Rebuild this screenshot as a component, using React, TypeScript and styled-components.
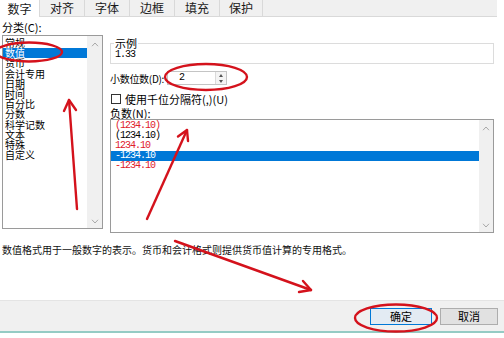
import React from "react";
import styled, { createGlobalStyle } from "styled-components";

const Global = createGlobalStyle`
  html, body { margin: 0; padding: 0; background: #fff; }
  body { font-family: "Noto Sans CJK SC", "Noto Sans", sans-serif; color: #000; }
`;

const Dialog = styled.div`
  position: relative;
  width: 504px;
  height: 338px;
  overflow: hidden;
  display: flex;
  flex-direction: column;
  background: #fff;
`;

const TabBar = styled.div`
  display: flex;
  height: 16px;
  width: 497px;
  background: #f0f0f0;
  border-bottom: 1px solid #d9d9d9;
`;

const Tab = styled.div<{ $active?: boolean; $w: number }>`
  width: ${(p) => p.$w}px;
  height: ${(p) => (p.$active ? 17 : 16)}px;
  box-sizing: border-box;
  display: flex;
  align-items: center;
  justify-content: center;
  font-size: 12px;
  line-height: 16px;
  border-right: 1px solid #d9d9d9;
  background: ${(p) => (p.$active ? "#fff" : "transparent")};
  color: #1a1a1a;
`;

const Main = styled.div`
  display: grid;
  grid-template-columns: 101px 384px;
  column-gap: 7px;
  padding: 2px 0 0 2px;
`;

const Column = styled.div`
  display: flex;
  flex-direction: column;
`;

const Label = styled.div<{ $h?: number; $mt?: number }>`
  font-size: 11px;
  height: ${(p) => p.$h ?? 16}px;
  line-height: ${(p) => p.$h ?? 16}px;
  margin-top: ${(p) => p.$mt ?? 0}px;
  white-space: nowrap;
`;

const ListBox = styled.div<{ $h: number }>`
  height: ${(p) => p.$h}px;
  box-sizing: border-box;
  border: 1px solid #9a9a9a;
  display: flex;
  background: #fff;
  overflow: hidden;
`;

const Items = styled.div<{ $pt: number }>`
  flex: 1;
  padding-top: ${(p) => p.$pt}px;
  overflow: hidden;
`;

const CatItem = styled.div<{ $sel?: boolean }>`
  font-size: 10px;
  line-height: 10.2px;
  height: 10.2px;
  padding-left: 2px;
  white-space: nowrap;
  background: ${(p) => (p.$sel ? "#0078d7" : "transparent")};
  color: ${(p) => (p.$sel ? "#fff" : "#000")};
`;

const NumItem = styled.div<{ $sel?: boolean; $red?: boolean }>`
  font-family: "Liberation Mono", "DejaVu Sans Mono", monospace;
  font-size: 10px;
  letter-spacing: -1px;
  line-height: 10px;
  height: 10px;
  padding-left: 4px;
  white-space: pre;
  background: ${(p) => (p.$sel ? "#0078d7" : "transparent")};
  color: ${(p) => (p.$sel ? "#fff" : p.$red ? "#e0202a" : "#000")};
`;

const ScrollBar = styled.div<{ $w: number }>`
  width: ${(p) => p.$w}px;
  background: #f0f0f0;
  display: flex;
  flex-direction: column;
  justify-content: space-between;
  align-items: center;
  padding: 6px 0 4px;
`;

const Chevron = ({ up }: { up?: boolean }) => (
  <svg width="8" height="5" viewBox="0 0 8 5">
    <path
      d={up ? "M1 4.2 L4 1 L7 4.2" : "M1 0.8 L4 4 L7 0.8"}
      fill="none"
      stroke="#a8a8a8"
      strokeWidth="1"
    />
  </svg>
);

const Sample = styled.fieldset`
  margin: 18px 0 0 0;
  padding: 0 0 2px 3px;
  border: 1px solid #dcdcdc;
  min-width: 0;
`;

const Legend = styled.legend`
  font-size: 11px;
  line-height: 12px;
  padding: 0 1px;
`;

const SampleValue = styled.div`
  font-family: "Liberation Mono", "DejaVu Sans Mono", monospace;
  font-size: 10px;
  letter-spacing: -1px;
  line-height: 12px;
  height: 12px;
  padding-left: 1px;
`;

const Row = styled.div<{ $mt: number; $h: number }>`
  display: flex;
  align-items: center;
  margin-top: ${(p) => p.$mt}px;
  height: ${(p) => p.$h}px;
`;

const RowLabel = styled.div`
  font-size: 10px;
  letter-spacing: -0.3px;
  margin-right: 3px;
  white-space: nowrap;
`;

const Spinner = styled.div`
  width: 60px;
  height: 14px;
  box-sizing: border-box;
  border: 1px solid #c4c4c4;
  display: flex;
  background: #fff;
`;

const SpinValue = styled.div`
  flex: 1;
  font-family: "Liberation Mono", monospace;
  font-size: 10px;
  line-height: 12px;
  padding-left: 11px;
`;

const SpinButtons = styled.div`
  width: 10px;
  display: flex;
  flex-direction: column;
  justify-content: space-around;
  align-items: center;
  background: #f4f4f4;
  border-left: 1px solid #dadada;
`;

const Tri = styled.div<{ $up?: boolean }>`
  width: 0;
  height: 0;
  border-left: 2.5px solid transparent;
  border-right: 2.5px solid transparent;
  ${(p) => (p.$up ? "border-bottom: 3px solid #555;" : "border-top: 3px solid #555;")}
`;

const CheckBox = styled.div`
  width: 10px;
  height: 10px;
  box-sizing: border-box;
  border: 1px solid #333;
  background: #fff;
  margin: 0 4px 0 1px;
`;

const CheckLabel = styled.div`
  font-size: 11px;
  white-space: nowrap;
`;

const Description = styled.div`
  margin-top: 11px;
  padding-left: 2px;
  font-size: 10px;
  line-height: 12px;
  white-space: nowrap;
  color: #111;
`;

const Footer = styled.div`
  margin-top: auto;
  margin-bottom: 5px;
  height: 33px;
  box-sizing: border-box;
  background: #f0f0f0;
  border-top: 1px solid #e4e4e4;
  border-bottom: 2px solid #95cbc4;
  display: flex;
  justify-content: flex-end;
  align-items: center;
  gap: 8px;
  padding-right: 6px;
`;

const Button = styled.div<{ $primary?: boolean; $w: number }>`
  width: ${(p) => p.$w}px;
  height: 17px;
  box-sizing: border-box;
  border: 1px solid ${(p) => (p.$primary ? "#0078d7" : "#adadad")};
  background: ${(p) => (p.$primary ? "#e3ebf3" : "#e1e1e1")};
  font-size: 11px;
  line-height: 15px;
  text-align: center;
`;

const Annotations = styled.svg`
  position: absolute;
  left: 0;
  top: 0;
  pointer-events: none;
`;

const tabs: [string, number][] = [
  ["数字", 40],
  ["对齐", 45],
  ["字体", 45],
  ["边框", 45],
  ["填充", 45],
  ["保护", 43],
];

const categories = [
  "常规",
  "数值",
  "货币",
  "会计专用",
  "日期",
  "时间",
  "百分比",
  "分数",
  "科学记数",
  "文本",
  "特殊",
  "自定义",
];

const negatives: { t: string; red?: boolean; sel?: boolean }[] = [
  { t: "(1234.10)", red: true },
  { t: "(1234.10)" },
  { t: "1234.10", red: true },
  { t: "-1234.10", sel: true },
  { t: "-1234.10", red: true },
];

const RED = "#d4121c";

export default function App() {
  return (
    <>
      <Global />
      <Dialog>
        <TabBar>
          {tabs.map(([t, w], i) => (
            <Tab key={t} $w={w} $active={i === 0}>
              {t}
            </Tab>
          ))}
        </TabBar>
        <Main>
          <Column>
            <Label>分类(C):</Label>
            <ListBox $h={194}>
              <Items $pt={2}>
                {categories.map((c, i) => (
                  <CatItem key={c} $sel={i === 1}>
                    {c}
                  </CatItem>
                ))}
              </Items>
              <ScrollBar $w={15}>
                <Chevron up />
                <Chevron />
              </ScrollBar>
            </ListBox>
          </Column>
          <Column>
            <Sample>
              <Legend>示例</Legend>
              <SampleValue>1.33</SampleValue>
            </Sample>
            <Row $mt={7} $h={14}>
              <RowLabel>小数位数(D):</RowLabel>
              <Spinner>
                <SpinValue>2</SpinValue>
                <SpinButtons>
                  <Tri $up />
                  <Tri />
                </SpinButtons>
              </Spinner>
            </Row>
            <Row $mt={8} $h={12}>
              <CheckBox />
              <CheckLabel>使用千位分隔符(,)(U)</CheckLabel>
            </Row>
            <Label $h={12} $mt={2}>
              负数(N):
            </Label>
            <ListBox $h={114}>
              <Items $pt={1}>
                {negatives.map((n, i) => (
                  <NumItem key={i} $red={n.red} $sel={n.sel}>
                    {n.t}
                  </NumItem>
                ))}
              </Items>
              <ScrollBar $w={14}>
                <Chevron up />
                <Chevron />
              </ScrollBar>
            </ListBox>
          </Column>
        </Main>
        <Description>
          数值格式用于一般数字的表示。货币和会计格式则提供货币值计算的专用格式。
        </Description>
        <Footer>
          <Button $primary $w={62}>
            确定
          </Button>
          <Button $w={58}>取消</Button>
        </Footer>
        <Annotations width="504" height="338" viewBox="0 0 504 338">
          <g fill="none" stroke={RED} strokeWidth="2.4" strokeLinecap="round" strokeLinejoin="round">
            <ellipse cx="29" cy="52" rx="33" ry="9.5" />
            <ellipse cx="206" cy="77" rx="41" ry="13" />
            <ellipse cx="396" cy="318" rx="41" ry="13.5" />
            <path d="M77 209 L69 100" />
            <path d="M64 111 L69 100 L76 110" />
            <path d="M147 219 L187 130" />
            <path d="M178 136.5 L187 130 L188 141" />
            <path d="M175 241 L311 290" />
            <path d="M303 281 L311 290 L299 292" />
          </g>
        </Annotations>
      </Dialog>
    </>
  );
}
